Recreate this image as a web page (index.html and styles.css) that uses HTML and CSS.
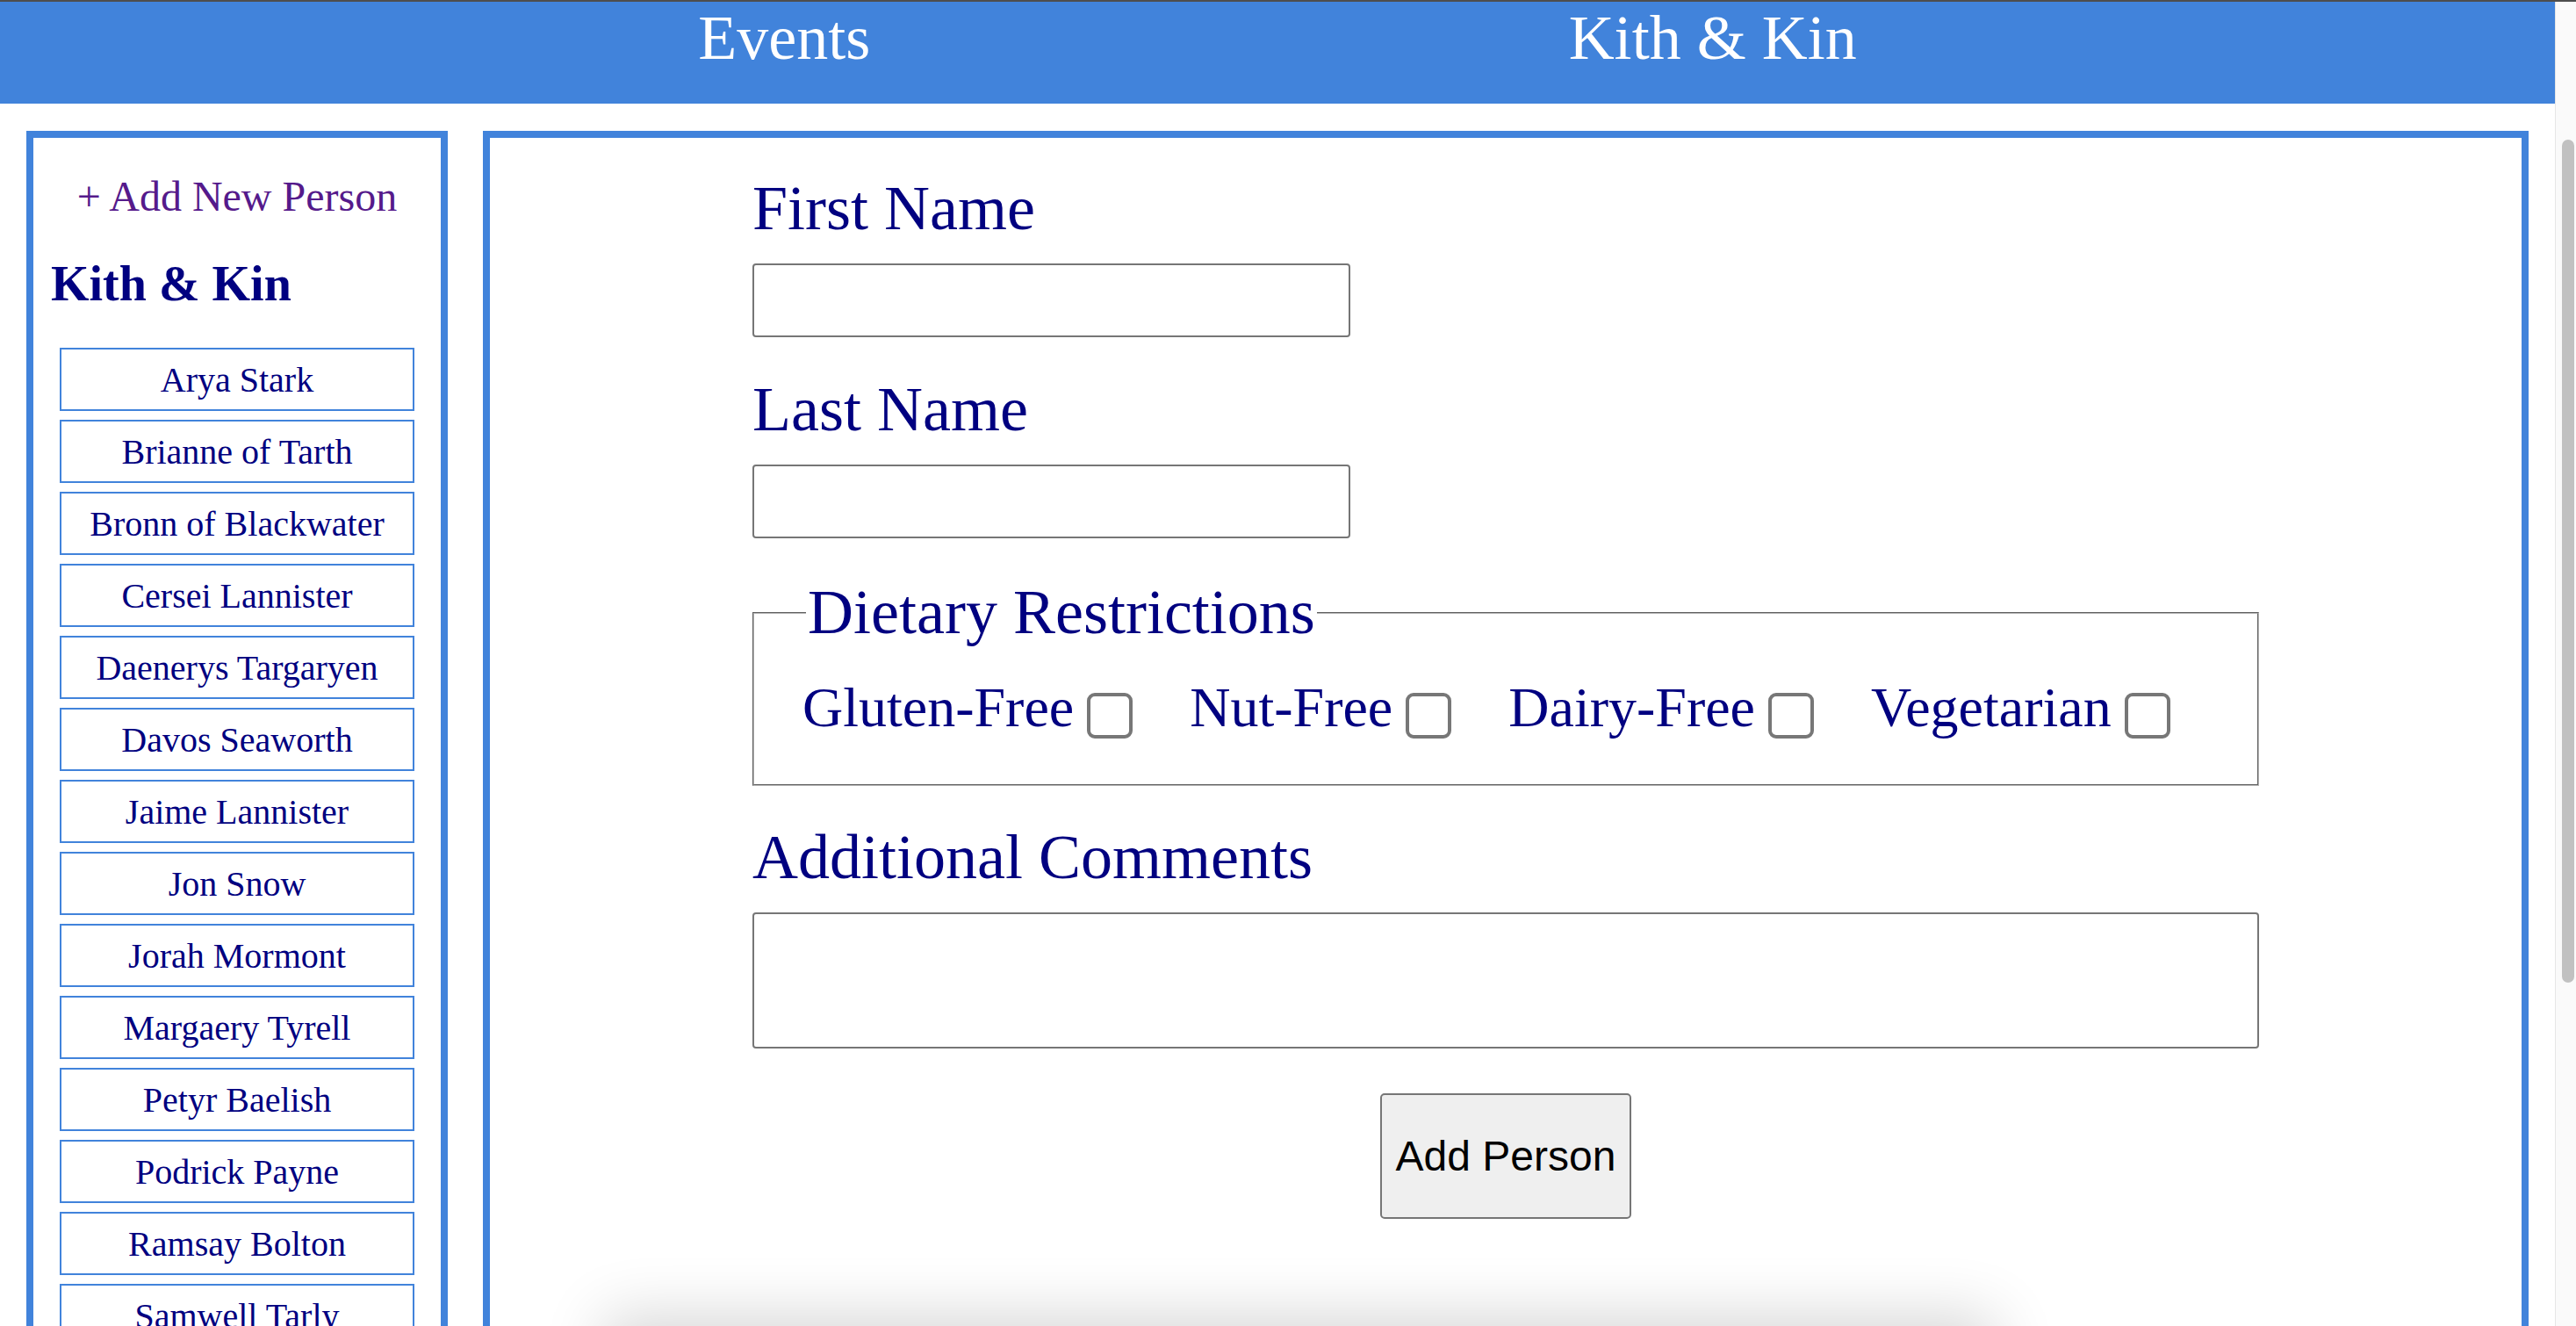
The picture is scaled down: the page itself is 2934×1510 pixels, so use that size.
FILE: index.html
```html
<!DOCTYPE html>
<html lang="en">
<head>
<meta charset="utf-8">
<title>Kith &amp; Kin</title>
<link rel="stylesheet" href="styles.css">
</head>
<body>
<header class="topbar">
  <a class="topbar-link" href="#events">Events</a>
  <a class="topbar-link" href="#kin">Kith &amp; Kin</a>
</header>
<div class="layout">
  <aside class="sidebar">
    <a class="add-link" href="#new">+ Add New Person</a>
    <h2 class="sidebar-title">Kith &amp; Kin</h2>
    <ul class="people">
      <li class="person">Arya Stark</li>
      <li class="person">Brianne of Tarth</li>
      <li class="person">Bronn of Blackwater</li>
      <li class="person">Cersei Lannister</li>
      <li class="person">Daenerys Targaryen</li>
      <li class="person">Davos Seaworth</li>
      <li class="person">Jaime Lannister</li>
      <li class="person">Jon Snow</li>
      <li class="person">Jorah Mormont</li>
      <li class="person">Margaery Tyrell</li>
      <li class="person">Petyr Baelish</li>
      <li class="person">Podrick Payne</li>
      <li class="person">Ramsay Bolton</li>
      <li class="person">Samwell Tarly</li>
    </ul>
  </aside>
  <main class="content">
    <form class="person-form">
      <label class="field-label first" for="first">First Name</label>
      <input class="text-input" id="first" type="text">
      <label class="field-label" for="last">Last Name</label>
      <input class="text-input" id="last" type="text">
      <fieldset class="diet">
        <legend class="diet-legend">Dietary Restrictions</legend>
        <div class="diet-row">
          <label class="diet-option">Gluten-Free<input class="check" type="checkbox"></label>
          <label class="diet-option">Nut-Free<input class="check" type="checkbox"></label>
          <label class="diet-option">Dairy-Free<input class="check" type="checkbox"></label>
          <label class="diet-option">Vegetarian<input class="check" type="checkbox"></label>
        </div>
      </fieldset>
      <label class="field-label comments-label" for="comments">Additional Comments</label>
      <textarea class="comments" id="comments"></textarea>
      <button class="submit" type="button">Add Person</button>
    </form>
  </main>
</div>
<div class="dock-shadow"></div>
<div class="scrollbar"><div class="scrollbar-thumb"></div></div>
</body>
</html>
```
FILE: styles.css
```css
html {
  background: #ffffff;
  overflow: hidden;
}

body {
  margin: 0;
  padding-right: 24px;
  border-top: 2px solid #4e4e4e;
  font-family: "Liberation Serif", "Times New Roman", serif;
  color: #000080;
}

.topbar {
  background: #4183db;
  height: 116px;
  display: flex;
  justify-content: space-evenly;
  align-items: flex-start;
}
.topbar-link {
  color: #ffffff;
  text-decoration: none;
  font-size: 72px;
  line-height: normal;
}

.layout {
  display: flex;
  align-items: stretch;
  gap: 40px;
  padding: 31px 30px 30px;
}

.sidebar {
  flex: none;
  box-sizing: content-box;
  width: 424px;
  border: 8px solid #4183db;
  padding: 0 20px 30px;
}
.add-link {
  display: block;
  margin-top: 39px;
  text-align: center;
  font-size: 48px;
  color: #551a8b;
  text-decoration: none;
}
.sidebar-title {
  margin: 40px 0 41px;
  font-size: 56px;
  font-weight: bold;
  line-height: normal;
}
.people {
  list-style: none;
  margin: 0 10px;
  padding: 0;
}
.person {
  box-sizing: border-box;
  height: 72px;
  border: 2px solid #4183db;
  padding: 11px 0;
  margin-bottom: 10px;
  font-size: 40px;
  line-height: normal;
  text-align: center;
  white-space: nowrap;
}

.content {
  flex: 1;
  border: 8px solid #4183db;
}
.person-form {
  width: 1716px;
  margin: 0 auto;
}
.field-label {
  display: block;
  font-size: 72px;
  line-height: normal;
  margin-top: 41px;
}
.field-label.first {
  margin-top: 39px;
}
.text-input {
  display: block;
  box-sizing: border-box;
  width: 681px;
  height: 84px;
  margin-top: 21px;
  border: 2px solid #767676;
  border-radius: 4px;
  font-size: 40px;
  padding: 0 8px;
}

.diet {
  margin: 43px 0 0;
  padding: 30px 0 50px 55px;
  border: 2px groove #b4b4b4;
  min-width: 0;
}
.diet-legend {
  font-size: 72px;
  line-height: normal;
  padding: 0 2px;
  margin-left: 4px;
}
.diet-row {
  display: flex;
  align-items: flex-start;
}
.diet-option {
  font-size: 64px;
  line-height: normal;
  margin-right: 65px;
  white-space: nowrap;
}
.check {
  -webkit-appearance: none;
  appearance: none;
  box-sizing: border-box;
  width: 52px;
  height: 52px;
  margin: 0 0 0 15px;
  border: 4px solid #777777;
  border-radius: 9px;
  background: #ffffff;
  vertical-align: -14px;
}

.comments-label {
  margin-top: 40px;
}
.comments {
  display: block;
  box-sizing: border-box;
  width: 100%;
  height: 155px;
  margin-top: 21px;
  border: 2px solid #767676;
  border-radius: 4px;
  resize: none;
}

.submit {
  display: block;
  margin: 51px auto 0;
  padding: 42px 16px;
  font-family: "Liberation Sans", Arial, sans-serif;
  font-size: 48px;
  line-height: normal;
  color: #000000;
  background: #efefef;
  border: 2px solid #767676;
  border-radius: 5px;
}

.dock-shadow {
  position: fixed;
  left: 700px;
  width: 1560px;
  bottom: -100px;
  height: 100px;
  box-shadow: 0 0 70px 12px rgba(0, 0, 0, 0.16);
  pointer-events: none;
}

.scrollbar {
  position: fixed;
  top: 2px;
  right: 0;
  bottom: 0;
  width: 23px;
  background: #fafafa;
  border-left: 1px solid #e6e6e6;
}
.scrollbar-thumb {
  position: absolute;
  top: 157px;
  height: 960px;
  left: 7px;
  right: 2px;
  border-radius: 8px;
  background: #c1c1c1;
}
```
